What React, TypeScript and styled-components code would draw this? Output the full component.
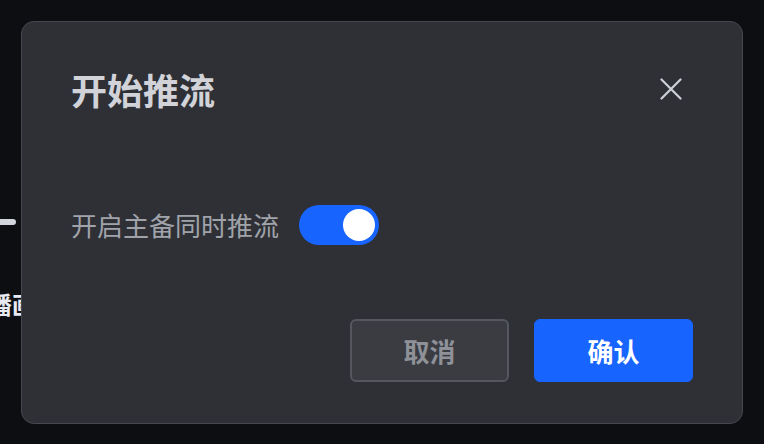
import * as React from "react";
import styled, { createGlobalStyle } from "styled-components";

const GlobalStyle = createGlobalStyle`
  html, body {
    margin: 0;
    padding: 0;
    background: #0d0e12;
  }
  body {
    font-family: "Noto Sans CJK SC", "Noto Sans", sans-serif;
  }
`;

const Page = styled.div`
  position: relative;
  width: 764px;
  height: 444px;
  overflow: hidden;
  background: #0d0e12;
`;

const SidePanel = styled.div`
  display: flex;
  flex-direction: column;
  align-items: flex-end;
  width: 120px;
  margin-left: -104px;
  padding-top: 219px;
  gap: 63px;
`;

const SliderTrack = styled.div`
  width: 120px;
  height: 6px;
  border-radius: 3px;
  background: #d2d5de;
`;

const PanelLabel = styled.div`
  width: 160px;
  margin-right: -44px;
  text-align: right;
  font-size: 24px;
  font-weight: 700;
  line-height: 32px;
  color: #e8eaf2;
  white-space: nowrap;
`;

const Overlay = styled.div`
  position: absolute;
  inset: 0;
  display: flex;
  align-items: center;
  justify-content: center;
`;

const Dialog = styled.div`
  box-sizing: border-box;
  width: 722px;
  height: 403px;
  padding: 39px 49px 41px 49px;
  background: #2e3036;
  border: 1px solid #45484f;
  border-radius: 13px;
  display: flex;
  flex-direction: column;
`;

const Header = styled.div`
  height: 56px;
  display: flex;
  align-items: center;
  justify-content: space-between;
`;

const Title = styled.h2`
  margin: 0;
  font-size: 36px;
  font-weight: 700;
  line-height: 56px;
  color: #d1d3d9;
`;

const CloseButton = styled.button`
  width: 44px;
  height: 44px;
  padding: 0;
  border: none;
  background: transparent;
  display: flex;
  align-items: center;
  justify-content: center;
  cursor: pointer;
`;

const Row = styled.div`
  margin-top: 88px;
  display: flex;
  align-items: center;
  gap: 20px;
`;

const Label = styled.span`
  font-size: 26px;
  line-height: 38px;
  color: #a0a3aa;
`;

const Switch = styled.button<{ $on: boolean }>`
  box-sizing: border-box;
  width: 80px;
  height: 40px;
  padding: 4px;
  border: none;
  border-radius: 20px;
  background: ${(p) => (p.$on ? "#1764ff" : "#55585e")};
  display: flex;
  justify-content: ${(p) => (p.$on ? "flex-end" : "flex-start")};
  cursor: pointer;
`;

const Knob = styled.span`
  width: 32px;
  height: 32px;
  border-radius: 50%;
  background: #ffffff;
`;

const Footer = styled.div`
  margin-top: auto;
  display: flex;
  justify-content: flex-end;
  gap: 25px;
`;

const Button = styled.button<{ $primary?: boolean }>`
  box-sizing: border-box;
  width: 159px;
  height: 63px;
  border-radius: 6px;
  border: ${(p) => (p.$primary ? "1px solid #1764ff" : "2px solid #54575d")};
  background: ${(p) => (p.$primary ? "#1764ff" : "#3a3c42")};
  color: ${(p) => (p.$primary ? "#ffffff" : "#8e9198")};
  font-family: "Noto Sans CJK SC", "Noto Sans", sans-serif;
  font-size: 26px;
  font-weight: 700;
  cursor: pointer;
`;

const CloseIcon = () => (
  <svg width="22" height="22" viewBox="0 0 22 22" fill="none">
    <path d="M1.5 1.5 L20.5 20.5 M20.5 1.5 L1.5 20.5" stroke="#cfd1d8" strokeWidth="2.2" strokeLinecap="round" />
  </svg>
);

export default function App() {
  const [on, setOn] = React.useState(true);
  return (
    <Page>
      <GlobalStyle />
      <SidePanel>
        <SliderTrack />
        <PanelLabel>直播画面</PanelLabel>
      </SidePanel>
      <Overlay>
        <Dialog>
          <Header>
            <Title>开始推流</Title>
            <CloseButton aria-label="关闭">
              <CloseIcon />
            </CloseButton>
          </Header>
          <Row>
            <Label>开启主备同时推流</Label>
            <Switch $on={on} onClick={() => setOn(!on)}>
              <Knob />
            </Switch>
          </Row>
          <Footer>
            <Button>取消</Button>
            <Button $primary>确认</Button>
          </Footer>
        </Dialog>
      </Overlay>
    </Page>
  );
}
